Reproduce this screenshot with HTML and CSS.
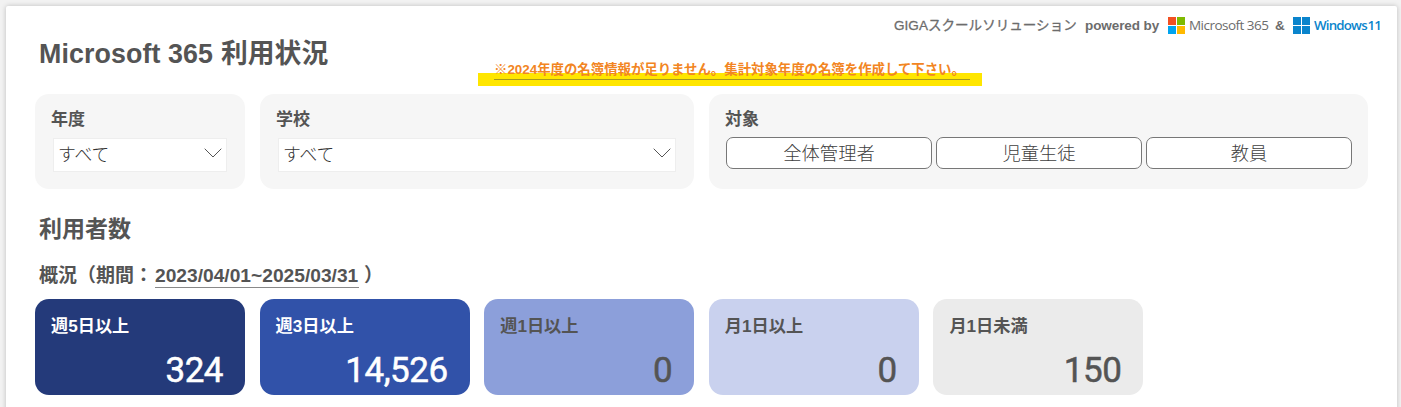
FILE: index.html
```html
<!DOCTYPE html>
<html lang="ja">
<head>
<meta charset="utf-8">
<title>Microsoft 365 利用状況</title>
<link rel="stylesheet" href="styles.css">
</head>
<body>
<main class="report">
  <header class="header">
    <h1 class="title"><span class="product">Microsoft 365</span>利用状況</h1>
    <div class="notice"><span class="notice-text">※2024年度の名簿情報が足りません。集計対象年度の名簿を作成して下さい。</span></div>
    <div class="brand">
      <span class="giga">GIGAスクールソリューション</span>
      <span class="powered">powered by</span>
      <svg class="logo" viewBox="0 0 17 17"><path fill="#f25022" d="M0 0h8v8H0z"/><path fill="#7fba00" d="M9 0h8v8H9z"/><path fill="#00a4ef" d="M0 9h8v8H0z"/><path fill="#ffb900" d="M9 9h8v8H9z"/></svg>
      <span class="ms">Microsoft 365</span>
      <span class="amp">&amp;</span>
      <svg class="logo" viewBox="0 0 17 17"><path fill="#0a84cc" d="M0 0h8v8H0zM9 0h8v8H9zM0 9h8v8H0zM9 9h8v8H9z"/></svg>
      <span class="win">Windows 11</span>
    </div>
  </header>

  <section class="filters">
    <div class="panel">
      <h3 class="label">年度</h3>
      <div class="select"><span>すべて</span><svg class="chevron" viewBox="0 0 18 10"><path d="M.7.7 9 9 17.3.7"/></svg></div>
    </div>
    <div class="panel">
      <h3 class="label">学校</h3>
      <div class="select"><span>すべて</span><svg class="chevron" viewBox="0 0 18 10"><path d="M.7.7 9 9 17.3.7"/></svg></div>
    </div>
    <div class="panel">
      <h3 class="label">対象</h3>
      <div class="buttons">
        <button class="button">全体管理者</button>
        <button class="button">児童生徒</button>
        <button class="button">教員</button>
      </div>
    </div>
  </section>

  <h2 class="heading">利用者数</h2>
  <p class="period"><span class="period-label">概況（期間：</span><span class="dates">2023/04/01~2025/03/31</span><span class="paren">）</span></p>

  <section class="cards">
    <div class="card week5"><span class="name">週5日以上</span><span class="value">324</span></div>
    <div class="card week3"><span class="name">週3日以上</span><span class="value">14,526</span></div>
    <div class="card week1"><span class="name">週1日以上</span><span class="value">0</span></div>
    <div class="card month1"><span class="name">月1日以上</span><span class="value">0</span></div>
    <div class="card under"><span class="name">月1日未満</span><span class="value">150</span></div>
  </section>
</main>
</body>
</html>
```
FILE: styles.css
```css
* { box-sizing: border-box; }
body {
  margin: 0;
  height: 407px;
  overflow: hidden;
  padding: 6px 4px 0 6px;
  background: #f2f2f2;
  color: #545454;
  font-family: "Liberation Sans", "Noto Sans CJK JP", sans-serif;
}
h1, h2, h3, p { margin: 0; }
.report {
  height: 420px;
  padding: 0 29px;
  background: #fff;
  border-radius: 2px;
  box-shadow: 0 0 5px rgba(0, 0, 0, .22);
}
.header {
  display: flex;
  height: 88px;
  margin-right: -12px;
  padding-left: 4px;
}
.title {
  display: flex;
  flex: none;
  width: 439px;
  padding-top: 32px;
  font-size: 26.8px;
  line-height: 32px;
  white-space: nowrap;
}
.product { width: 182px; letter-spacing: .1px; }
.notice {
  flex: none;
  width: 504px;
  height: 25px;
  margin: 55px -120px 0 0;
  padding: 0 12px 0 16px;
  background: linear-gradient(transparent 12px, #ffe600 12px);
}
.notice-text {
  display: block;
  width: 476px;
  height: 19px;
  border-bottom: 1px solid #a69a1c;
  color: #f28522;
  font-size: 13.4px;
  font-weight: bold;
  line-height: 17px;
  white-space: nowrap;
}
.brand {
  display: flex;
  flex: none;
  align-items: center;
  height: 20px;
  margin-top: 9px;
  margin-left: auto;
  color: #6c6c6c;
  font-size: 13.5px;
  font-weight: bold;
  line-height: 20px;
  white-space: nowrap;
}
.giga {
  width: 191px;
  padding-top: 1px;
  font-weight: 400;
  letter-spacing: .05px;
  -webkit-text-stroke: .3px;
}
.powered { width: 83px; padding-top: 1px; letter-spacing: -.08px; }
.logo { width: 17px; height: 17px; flex: none; }
.ms { width: 86px; padding-left: 4px; font: 13.5px/20px "Open Sans", sans-serif; letter-spacing: -.53px; }
.amp { width: 22px; padding: 1px 0 0 4px; }
.win { width: 70px; padding-left: 4px; color: #0a84cc; font: 600 13.3px/20px "Open Sans", sans-serif; letter-spacing: -.8px; word-spacing: -2px; }
.filters {
  display: grid;
  grid-template-columns: 210px 434px 659px;
  gap: 15px;
  height: 95px;
}
.panel {
  padding: 15px 16px 0;
  border-radius: 14px;
  background: #f6f6f6;
}
.label { font-size: 17px; line-height: 22px; }
.select {
  display: flex;
  align-items: center;
  justify-content: space-between;
  height: 34px;
  margin: 7px 2px 0;
  padding: 0 4px 4px 4px;
  border: 1px solid #eeeeee;
  background: #fff;
  color: #333;
  font-size: 17.8px;
  font-weight: 300;
}
.chevron { width: 18px; height: 10px; fill: none; stroke: #555; stroke-width: 1; }
.buttons {
  display: grid;
  grid-template-columns: repeat(3, 206px);
  gap: 4px;
  margin-top: 6px;
  padding-left: 1px;
}
.button {
  height: 32px;
  padding: 0 0 2px;
  border: 1px solid #777;
  border-radius: 7px;
  background: #fff;
  color: #404040;
  font: 300 18.3px/28px "Noto Sans CJK JP", sans-serif;
}
.heading { padding: 25px 0 0 4px; font-size: 23px; line-height: 30px; }
.period {
  display: flex;
  height: 55px;
  padding: 20px 0 0 4px;
  font-size: 19px;
  font-weight: bold;
  line-height: 24px;
}
.period-label { width: 116px; white-space: nowrap; }
.dates { width: 204px; height: 24px; border-bottom: 1px solid #888; font-size: 19.2px; white-space: nowrap; }
.paren { padding-left: 5px; }
.cards { display: grid; grid-template-columns: repeat(5, 210px); gap: 14.6px; }
.card {
  display: flex;
  flex-direction: column;
  height: 96px;
  padding: 16px 22px 0 16px;
  border-radius: 14px;
}
.name { font-size: 17.2px; font-weight: bold; line-height: 22px; }
.value {
  align-self: flex-end;
  margin-top: 13px;
  font: 400 35px/42px Roboto, sans-serif;
  letter-spacing: -.5px;
  -webkit-text-stroke: .5px;
}
.week5 { background: #243a7a; color: #fff; }
.week3 { background: #3152a9; color: #fff; }
.week1 { background: #8c9fda; }
.month1 { background: #c9d1ee; }
.under { background: #ebebeb; }
```
